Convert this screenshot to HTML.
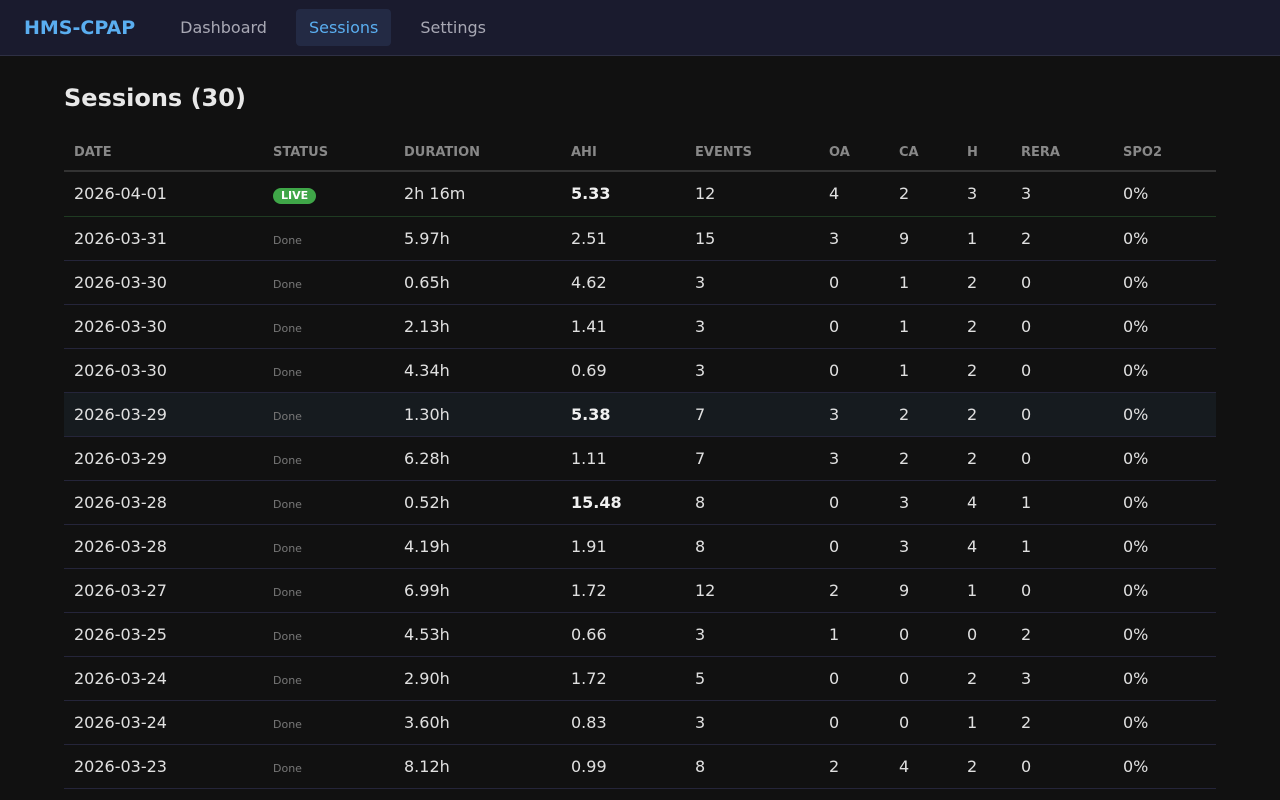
<!DOCTYPE html>
<html><head><meta charset="utf-8"><style>
*{box-sizing:border-box;margin:0;padding:0}
html,body{width:1280px;height:800px;overflow:hidden}
body{background:#111;font-family:"DejaVu Sans","Liberation Sans",sans-serif;color:#e0e0e0}
nav{height:56px;background:#1a1b2e;border-bottom:1px solid #2e3044;display:flex;align-items:center;padding-left:24px}
.logo{color:#5aaef0;font-weight:bold;font-size:19px;margin-right:32px}
nav a{font-size:16px;color:#a8a8b4;padding:9px 13px;border-radius:4px;margin-right:16px;text-decoration:none}
nav a.act{background:#232a44;color:#5aaef0}
main{padding:0 64px}
h1{font-size:24px;font-weight:bold;color:#e8e8e8;margin-top:28px;height:42px;line-height:28px}
table{width:1152px;border-collapse:collapse;table-layout:fixed;margin-top:11px}
th{font-size:13px;color:#888;text-align:left;font-weight:bold;padding:0 10px;height:34px;border-bottom:2px solid #333;vertical-align:top;padding-top:8px}
td{font-size:16px;padding:0 10px;height:44px;border-bottom:1px solid #25253a;white-space:nowrap}
tr.first td{border-bottom-color:#1f3b22;height:45px}
tr.hov td{background:#161b1f}
b{color:#f0f0f0}
.done{font-size:11px;color:#777}
.live{display:inline-block;background:#3fa648;color:#fff;font-size:11px;font-weight:bold;border-radius:9px;padding:1px 8px;line-height:14px}
</style></head><body>
<nav><span class="logo">HMS-CPAP</span><a>Dashboard</a><a class="act">Sessions</a><a>Settings</a></nav>
<main><h1>Sessions (30)</h1>
<table>
<colgroup><col style="width:199px"><col style="width:131px"><col style="width:167px"><col style="width:124px"><col style="width:134px"><col style="width:70px"><col style="width:68px"><col style="width:54px"><col style="width:102px"><col style="width:103px"></colgroup>
<tr><th>DATE</th><th>STATUS</th><th>DURATION</th><th>AHI</th><th>EVENTS</th><th>OA</th><th>CA</th><th>H</th><th>RERA</th><th>SPO2</th></tr>
<tr class="first"><td>2026-04-01</td><td><span class="live">LIVE</span></td><td>2h 16m</td><td><b>5.33</b></td><td>12</td><td>4</td><td>2</td><td>3</td><td>3</td><td>0%</td></tr>
<tr><td>2026-03-31</td><td><span class="done">Done</span></td><td>5.97h</td><td>2.51</td><td>15</td><td>3</td><td>9</td><td>1</td><td>2</td><td>0%</td></tr>
<tr><td>2026-03-30</td><td><span class="done">Done</span></td><td>0.65h</td><td>4.62</td><td>3</td><td>0</td><td>1</td><td>2</td><td>0</td><td>0%</td></tr>
<tr><td>2026-03-30</td><td><span class="done">Done</span></td><td>2.13h</td><td>1.41</td><td>3</td><td>0</td><td>1</td><td>2</td><td>0</td><td>0%</td></tr>
<tr><td>2026-03-30</td><td><span class="done">Done</span></td><td>4.34h</td><td>0.69</td><td>3</td><td>0</td><td>1</td><td>2</td><td>0</td><td>0%</td></tr>
<tr class="hov"><td>2026-03-29</td><td><span class="done">Done</span></td><td>1.30h</td><td><b>5.38</b></td><td>7</td><td>3</td><td>2</td><td>2</td><td>0</td><td>0%</td></tr>
<tr><td>2026-03-29</td><td><span class="done">Done</span></td><td>6.28h</td><td>1.11</td><td>7</td><td>3</td><td>2</td><td>2</td><td>0</td><td>0%</td></tr>
<tr><td>2026-03-28</td><td><span class="done">Done</span></td><td>0.52h</td><td><b>15.48</b></td><td>8</td><td>0</td><td>3</td><td>4</td><td>1</td><td>0%</td></tr>
<tr><td>2026-03-28</td><td><span class="done">Done</span></td><td>4.19h</td><td>1.91</td><td>8</td><td>0</td><td>3</td><td>4</td><td>1</td><td>0%</td></tr>
<tr><td>2026-03-27</td><td><span class="done">Done</span></td><td>6.99h</td><td>1.72</td><td>12</td><td>2</td><td>9</td><td>1</td><td>0</td><td>0%</td></tr>
<tr><td>2026-03-25</td><td><span class="done">Done</span></td><td>4.53h</td><td>0.66</td><td>3</td><td>1</td><td>0</td><td>0</td><td>2</td><td>0%</td></tr>
<tr><td>2026-03-24</td><td><span class="done">Done</span></td><td>2.90h</td><td>1.72</td><td>5</td><td>0</td><td>0</td><td>2</td><td>3</td><td>0%</td></tr>
<tr><td>2026-03-24</td><td><span class="done">Done</span></td><td>3.60h</td><td>0.83</td><td>3</td><td>0</td><td>0</td><td>1</td><td>2</td><td>0%</td></tr>
<tr><td>2026-03-23</td><td><span class="done">Done</span></td><td>8.12h</td><td>0.99</td><td>8</td><td>2</td><td>4</td><td>2</td><td>0</td><td>0%</td></tr>
<tr><td>2026-03-22</td><td><span class="done">Done</span></td><td>7.05h</td><td>1.20</td><td>9</td><td>2</td><td>3</td><td>2</td><td>2</td><td>0%</td></tr>
</table></main>
</body></html>
